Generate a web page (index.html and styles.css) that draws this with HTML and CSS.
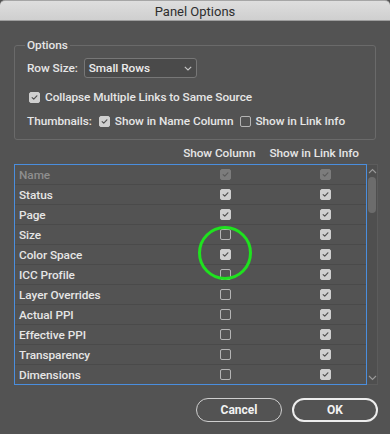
FILE: index.html
```html
<!DOCTYPE html>
<html lang="en">
<head>
<meta charset="utf-8">
<title>Panel Options</title>
<link rel="stylesheet" href="styles.css">
</head>
<body>
<div class="window">
  <div class="titlebar">Panel Options</div>

  <fieldset class="group">
    <legend>Options</legend>
    <div class="opt-row">
      <span class="lbl">Row Size:</span>
      <div class="select">
        <span>Small Rows</span>
        <svg class="chev" width="8" height="5" viewBox="0 0 8 5"><path d="M0.8 0.8 L4 4 L7.2 0.8" fill="none" stroke="#c8c8c8" stroke-width="1.1"/></svg>
      </div>
    </div>
    <div class="opt-row collapse">
      <span class="cb on"><svg viewBox="0 0 11 11"><path d="M2.6 5.6 L4.6 7.6 L8.4 3.4" /></svg></span>
      <span class="txt">Collapse Multiple Links to Same Source</span>
    </div>
    <div class="opt-row thumbs">
      <span class="lbl">Thumbnails:</span>
      <span class="cb on"><svg viewBox="0 0 11 11"><path d="M2.6 5.6 L4.6 7.6 L8.4 3.4" /></svg></span>
      <span class="txt">Show in Name Column</span>
      <span class="cb"></span>
      <span class="txt">Show in Link Info</span>
    </div>
  </fieldset>

  <div class="col-heads">
    <span class="head-show">Show Column</span>
    <span class="head-info">Show in Link Info</span>
  </div>

  <div class="list-wrap">
    <div class="list">
      <div class="row disabled"><span class="name">Name</span><span class="cell"><span class="cb on dis"><svg viewBox="0 0 11 11"><path d="M2.6 5.6 L4.6 7.6 L8.4 3.4" /></svg></span></span><span class="cell"><span class="cb on dis"><svg viewBox="0 0 11 11"><path d="M2.6 5.6 L4.6 7.6 L8.4 3.4" /></svg></span></span></div>
      <div class="row"><span class="name">Status</span><span class="cell"><span class="cb on"><svg viewBox="0 0 11 11"><path d="M2.6 5.6 L4.6 7.6 L8.4 3.4" /></svg></span></span><span class="cell"><span class="cb on"><svg viewBox="0 0 11 11"><path d="M2.6 5.6 L4.6 7.6 L8.4 3.4" /></svg></span></span></div>
      <div class="row"><span class="name">Page</span><span class="cell"><span class="cb on"><svg viewBox="0 0 11 11"><path d="M2.6 5.6 L4.6 7.6 L8.4 3.4" /></svg></span></span><span class="cell"><span class="cb on"><svg viewBox="0 0 11 11"><path d="M2.6 5.6 L4.6 7.6 L8.4 3.4" /></svg></span></span></div>
      <div class="row"><span class="name">Size</span><span class="cell"><span class="cb"></span></span><span class="cell"><span class="cb on"><svg viewBox="0 0 11 11"><path d="M2.6 5.6 L4.6 7.6 L8.4 3.4" /></svg></span></span></div>
      <div class="row"><span class="name">Color Space</span><span class="cell"><span class="cb on"><svg viewBox="0 0 11 11"><path d="M2.6 5.6 L4.6 7.6 L8.4 3.4" /></svg></span></span><span class="cell"><span class="cb on"><svg viewBox="0 0 11 11"><path d="M2.6 5.6 L4.6 7.6 L8.4 3.4" /></svg></span></span></div>
      <div class="row"><span class="name">ICC Profile</span><span class="cell"><span class="cb"></span></span><span class="cell"><span class="cb on"><svg viewBox="0 0 11 11"><path d="M2.6 5.6 L4.6 7.6 L8.4 3.4" /></svg></span></span></div>
      <div class="row"><span class="name">Layer Overrides</span><span class="cell"><span class="cb"></span></span><span class="cell"><span class="cb on"><svg viewBox="0 0 11 11"><path d="M2.6 5.6 L4.6 7.6 L8.4 3.4" /></svg></span></span></div>
      <div class="row"><span class="name">Actual PPI</span><span class="cell"><span class="cb"></span></span><span class="cell"><span class="cb on"><svg viewBox="0 0 11 11"><path d="M2.6 5.6 L4.6 7.6 L8.4 3.4" /></svg></span></span></div>
      <div class="row"><span class="name">Effective PPI</span><span class="cell"><span class="cb"></span></span><span class="cell"><span class="cb on"><svg viewBox="0 0 11 11"><path d="M2.6 5.6 L4.6 7.6 L8.4 3.4" /></svg></span></span></div>
      <div class="row"><span class="name">Transparency</span><span class="cell"><span class="cb"></span></span><span class="cell"><span class="cb on"><svg viewBox="0 0 11 11"><path d="M2.6 5.6 L4.6 7.6 L8.4 3.4" /></svg></span></span></div>
      <div class="row"><span class="name">Dimensions</span><span class="cell"><span class="cb"></span></span><span class="cell"><span class="cb on"><svg viewBox="0 0 11 11"><path d="M2.6 5.6 L4.6 7.6 L8.4 3.4" /></svg></span></span></div>
    </div>
    <div class="scrollbar">
      <svg class="arrow" width="9" height="6" viewBox="0 0 9 6"><path d="M1 5 L4.5 1.5 L8 5" fill="none" stroke="#9a9a9a" stroke-width="1.1"/></svg>
      <div class="thumb"></div>
      <div class="track-space"></div>
      <svg class="arrow" width="9" height="6" viewBox="0 0 9 6"><path d="M1 1 L4.5 4.5 L8 1" fill="none" stroke="#9a9a9a" stroke-width="1.1"/></svg>
    </div>
  </div>

  <div class="buttons">
    <button class="btn">Cancel</button>
    <button class="btn ok">OK</button>
  </div>
</div>
<div class="highlight"></div>
</body>
</html>
```

FILE: styles.css
```css
* { box-sizing: border-box; }

html, body {
  margin: 0;
  padding: 0;
  background: #535353;
}

body {
  width: 390px;
  height: 434px;
  overflow: hidden;
  font-family: Roboto, "Liberation Sans", Arial, sans-serif;
  font-size: 11.8px;
  font-weight: 500;
  letter-spacing: -0.05px;
  color: #e6e6e6;
  position: relative;
}

.window {
  display: flex;
  flex-direction: column;
  height: 434px;
}

.titlebar {
  height: 21px;
  flex: none;
  display: flex;
  align-items: center;
  justify-content: center;
  background: linear-gradient(#dedede, #cfcfcf);
  border-top: 1px solid #a6a6a6;
  border-bottom: 1px solid #9e9e9e;
  border-radius: 5px 5px 0 0;
  color: #2e2e2e;
  font-size: 13px;
  font-weight: 400;
  letter-spacing: 0;
  padding-top: 1px;
}

.group {
  margin: 16px 14px 0 14px;
  padding: 5px 12px 8px 12px;
  border: 1px solid #6a6a6a;
  border-radius: 3px;
  min-width: 0;
  display: flex;
  flex-direction: column;
}

.group legend {
  padding: 0 2px;
  margin-left: -2px;
  line-height: 16px;
  color: #e6e6e6;
}

.opt-row {
  height: 20px;
  display: flex;
  align-items: center;
}

.opt-row.collapse { margin-top: 9px; padding-left: 2px; }
.opt-row.thumbs { margin-top: 4px; }

.lbl { margin-right: 6px; }

.select {
  width: 113px;
  height: 20px;
  border: 1px solid #777777;
  border-radius: 3px;
  background: #4a4a4a;
  display: flex;
  align-items: center;
  justify-content: space-between;
  padding: 0 4px 0 4px;
  color: #ececec;
}

.chev { margin-top: 1px; }

.cb {
  width: 11px;
  height: 11px;
  flex: none;
  border: 1px solid #b4b4b4;
  border-radius: 2px;
  display: inline-flex;
  align-items: center;
  justify-content: center;
}

.cb svg {
  width: 11px;
  height: 11px;
}

.cb svg path {
  fill: none;
  stroke: #505050;
  stroke-width: 1.4;
  stroke-linecap: round;
  stroke-linejoin: round;
}

.cb.on {
  background: #cfcfcf;
  border-color: #cfcfcf;
}

.cb.dis {
  background: #7c7c7c;
  border-color: #7c7c7c;
}

.cb.dis svg path { stroke: #5c5c5c; }

.collapse .cb { margin-right: 5px; }
.thumbs .cb { margin-right: 5px; }
.thumbs .txt { margin-right: 6px; }
.thumbs .lbl { margin-right: 7px; }

.col-heads {
  height: 20px;
  margin-top: 3px;
  display: flex;
  align-items: center;
  justify-content: flex-end;
  padding-right: 31px;
  gap: 14px;
}

.list-wrap {
  margin: 1px 12px 0 14px;
  display: flex;
}

.list {
  flex: 1;
  height: 221px;
  border: 1px solid #4a8ede;
  overflow: hidden;
}

.row {
  height: 20px;
  display: grid;
  grid-template-columns: 1fr 60px 60px;
  column-gap: 40px;
  padding: 0 11px 0 4px;
  align-items: center;
  border-bottom: 1px solid #4a4a4a;
}

.row.disabled .name { color: #8e8e8e; }

.cell {
  display: flex;
  justify-content: center;
}

.scrollbar {
  width: 11px;
  height: 221px;
  background: #4f4f4f;
  border: 1px solid #5c5c5c;
  border-left: none;
  display: flex;
  flex-direction: column;
  align-items: center;
  padding: 3px 0 3px 0;
}

.arrow { flex: none; }

.thumb {
  width: 8px;
  height: 36px;
  margin-top: 3px;
  border-radius: 4px;
  background: #6c6c6c;
}

.track-space { flex: 1; }

.buttons {
  margin: 13px 12px 0 0;
  display: flex;
  justify-content: flex-end;
  gap: 10px;
}

.btn {
  width: 86px;
  height: 24px;
  border-radius: 12px;
  background: transparent;
  border: 1.5px solid #cfcfcf;
  color: #f2f2f2;
  font-family: Roboto, "Liberation Sans", Arial, sans-serif;
  font-size: 12px;
  font-weight: 700;
  padding: 0;
}

.btn.ok {
  border: 2px solid #ededed;
}

.highlight {
  position: absolute;
  left: 198px;
  top: 226px;
  width: 54px;
  height: 54px;
  border: 3px solid #1fe21f;
  border-radius: 50%;
  pointer-events: none;
}
```
